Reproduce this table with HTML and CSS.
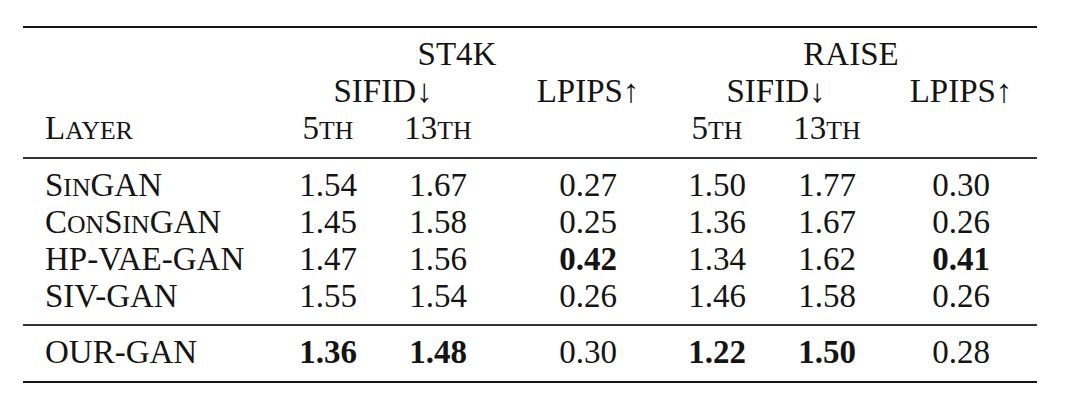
FILE: index.html
```html
<!DOCTYPE html>
<html lang="en">
<head>
    <meta charset="UTF-8">
    <title>Layer comparison</title>
    <link rel="stylesheet" href="styles.css">
</head>
<body>
    <table class="results">
        <colgroup>
            <col class="c-layer">
            <col class="c-5">
            <col class="c-13">
            <col class="c-lp">
            <col class="c-r5">
            <col class="c-r13">
            <col class="c-rlp">
        </colgroup>
        <thead>
            <tr class="first">
                <th></th>
                <th colspan="3" class="ds-st4k">ST4K</th>
                <th colspan="3" class="ds-raise">RAISE</th>
            </tr>
            <tr>
                <th></th>
                <th colspan="2">SIFID↓</th>
                <th>LPIPS↑</th>
                <th colspan="2" class="sifid-r">SIFID↓</th>
                <th class="end">LPIPS↑</th>
            </tr>
            <tr class="last">
                <th class="name">L<span class="sm">ayer</span></th>
                <th>5<span class="sm">th</span></th>
                <th>13<span class="sm">th</span></th>
                <th></th>
                <th>5<span class="sm">th</span></th>
                <th>13<span class="sm">th</span></th>
                <th class="end"></th>
            </tr>
        </thead>
        <tbody class="baselines">
            <tr class="first">
                <td class="name">S<span class="sm">in</span>GAN</td>
                <td>1.54</td><td>1.67</td><td>0.27</td>
                <td>1.50</td><td>1.77</td><td class="end">0.30</td>
            </tr>
            <tr>
                <td class="name">C<span class="sm">on</span>S<span class="sm">in</span>GAN</td>
                <td>1.45</td><td>1.58</td><td>0.25</td>
                <td>1.36</td><td>1.67</td><td class="end">0.26</td>
            </tr>
            <tr>
                <td class="name">HP-VAE-GAN</td>
                <td>1.47</td><td>1.56</td><td><b>0.42</b></td>
                <td>1.34</td><td>1.62</td><td class="end"><b>0.41</b></td>
            </tr>
            <tr class="last">
                <td class="name">SIV-GAN</td>
                <td>1.55</td><td>1.54</td><td>0.26</td>
                <td>1.46</td><td>1.58</td><td class="end">0.26</td>
            </tr>
        </tbody>
        <tbody class="ours">
            <tr class="first last">
                <td class="name">OUR-GAN</td>
                <td><b>1.36</b></td><td><b>1.48</b></td><td>0.30</td>
                <td><b>1.22</b></td><td><b>1.50</b></td><td class="end">0.28</td>
            </tr>
        </tbody>
    </table>
</body>
</html>
```
FILE: styles.css
```css
* { margin: 0; padding: 0; box-sizing: border-box; }
body { background: #fff; color: #141414; font-family: 'Liberation Serif', 'Times New Roman', serif; width: 1080px; height: 405px; padding: 26px 0 0 23px; overflow: hidden; }

.results { width: 1014px; table-layout: fixed; border-collapse: collapse; font-size: 33px; line-height: 37px; }
.results thead { border-top: 2px solid #151515; border-bottom: 2px solid #333; }
.results .baselines { border-bottom: 2px solid #333; }
.results .ours { border-bottom: 2px solid #151515; }

.c-layer { width: 250px; }
.c-5, .c-13 { width: 110px; }
.c-lp { width: 190px; }
.c-r5 { width: 68px; }
.c-r13 { width: 152px; }
.c-rlp { width: 134px; }

.results th, .results td { font-weight: normal; text-align: center; white-space: nowrap; padding: 0; }
.results b { font-weight: bold; }
.results .name { text-align: left; padding-left: 22px; }
.results .end { padding-right: 18px; }

/* fake small caps, closer to the LaTeX ones than font-variant */
.sm { font-size: 0.78em; line-height: 0; text-transform: uppercase; }

.results .ds-st4k { padding-right: 42px; }
.results .ds-raise { padding-right: 18px; }
.results .sifid-r { padding-right: 34px; }

.results tr.first > * { padding-top: 8px; }
.results tr.last > * { padding-bottom: 10px; }
.results .baselines tr.last > * { padding-bottom: 9px; }
```
